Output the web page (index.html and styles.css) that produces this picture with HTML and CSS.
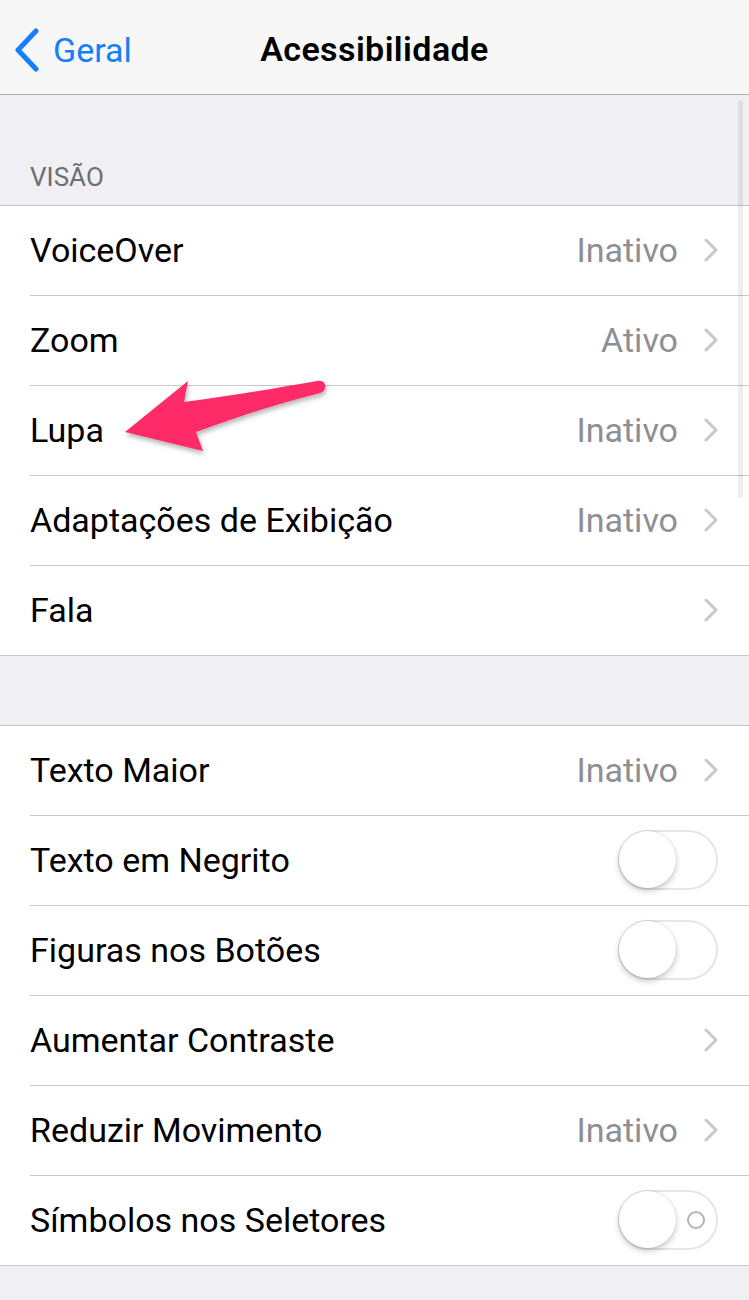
FILE: index.html
```html
<!DOCTYPE html>
<html lang="pt-BR">
<head>
  <meta charset="UTF-8">
  <title>Acessibilidade</title>
  <link rel="stylesheet" href="styles.css">
</head>
<body>
  <div class="screen">
    <!-- Barra de navegação -->
    <header class="navbar">
      <a class="back" href="#">
        <svg class="back-icon" width="28" height="44" viewBox="0 0 28 44">
          <path d="M23 3 L5 22 L23 41" fill="none" stroke="#157efb" stroke-width="5" stroke-linecap="round" stroke-linejoin="round"/>
        </svg>
        <span>Geral</span>
      </a>
      <h1 class="title">Acessibilidade</h1>
    </header>

    <div class="section-header">VISÃO</div>
    <ul class="group">
      <li class="row"><div class="row-inner"><span class="label">VoiceOver</span><span class="value">Inativo</span><i class="chevron"></i></div></li>
      <li class="row"><div class="row-inner"><span class="label">Zoom</span><span class="value">Ativo</span><i class="chevron"></i></div></li>
      <li class="row"><div class="row-inner"><span class="label">Lupa</span><span class="value">Inativo</span><i class="chevron"></i></div></li>
      <li class="row"><div class="row-inner"><span class="label">Adaptações de Exibição</span><span class="value">Inativo</span><i class="chevron"></i></div></li>
      <li class="row"><div class="row-inner"><span class="label">Fala</span><span class="value"></span><i class="chevron"></i></div></li>
    </ul>

    <div class="spacer"></div>
    <ul class="group">
      <li class="row"><div class="row-inner"><span class="label">Texto Maior</span><span class="value">Inativo</span><i class="chevron"></i></div></li>
      <li class="row"><div class="row-inner"><span class="label">Texto em Negrito</span><span class="switch"><span class="knob"></span></span></div></li>
      <li class="row"><div class="row-inner"><span class="label">Figuras nos Botões</span><span class="switch"><span class="knob"></span></span></div></li>
      <li class="row"><div class="row-inner"><span class="label">Aumentar Contraste</span><span class="value"></span><i class="chevron"></i></div></li>
      <li class="row"><div class="row-inner"><span class="label">Reduzir Movimento</span><span class="value">Inativo</span><i class="chevron"></i></div></li>
      <li class="row"><div class="row-inner"><span class="label">Símbolos nos Seletores</span><span class="switch"><span class="knob"></span><span class="off-mark"></span></span></div></li>
    </ul>

    <!-- barra de rolagem -->
    <div class="scrollbar"></div>

    <!-- seta de destaque -->
    <svg class="callout" width="749" height="1300" viewBox="0 0 749 1300">
      <defs>
        <filter id="sombra" x="-20%" y="-20%" width="140%" height="160%">
          <feDropShadow dx="1" dy="3" stdDeviation="2.5" flood-color="#000" flood-opacity="0.3"/>
        </filter>
      </defs>
      <path d="M125 432 L188 381 L184 402 C230 396 278 388 317 381 C327 379 328 391 320 393 C280 403 240 416 196 432 L203 451 Z" fill="#ff2a68" filter="url(#sombra)"/>
    </svg>
  </div>
</body>
</html>
```

FILE: styles.css
```css
body {
  margin: 0;
  background-color: #efeff4;
  font-family: Roboto, "Liberation Sans", sans-serif;
}
.screen {
  position: relative;
  width: 749px;
  min-height: 1300px;
  background-color: #efeff4;
}
.navbar {
  height: 94px;
  border-bottom: 1px solid #b2b2b2;
  background-color: #f7f7f8;
  display: flex;
  align-items: center;
  justify-content: center;
  position: relative;
}
.back {
  position: absolute;
  left: 13px;
  top: 28px;
  display: flex;
  align-items: center;
  gap: 12px;
  color: #157efb;
  text-decoration: none;
  font-size: 34px;
}
.title {
  margin: 3px 0 0;
  font-size: 34px;
  font-weight: 600;
  color: #000;
  letter-spacing: 0.4px;
}
.section-header {
  height: 110px;
  box-sizing: border-box;
  padding: 0 30px 15px;
  display: flex;
  align-items: flex-end;
  font-size: 26px;
  line-height: 26px;
  color: #6d6d72;
}
.spacer {
  height: 69px;
}
.group {
  list-style: none;
  margin: 0;
  padding: 0;
  background-color: #fff;
  border-top: 1px solid #c8c7cc;
  border-bottom: 1px solid #c8c7cc;
}
.row {
  height: 90px;
  padding-left: 30px;
  box-sizing: border-box;
}
.row:last-child {
  height: 89px;
}
.row-inner {
  height: 100%;
  box-sizing: border-box;
  display: flex;
  align-items: center;
  padding-right: 31px;
  padding-bottom: 2px;
  border-bottom: 1px solid #c8c7cc;
}
.row:last-child .row-inner {
  border-bottom: none;
}
.label {
  flex: 1;
  font-size: 34px;
  color: #000;
}
.value {
  font-size: 34px;
  color: #8e8e93;
  margin-right: 26px;
}
.chevron {
  width: 14px;
  height: 24px;
  background: no-repeat center / 14px 24px url("data:image/svg+xml;utf8,<svg xmlns='http://www.w3.org/2000/svg' width='14' height='24' viewBox='0 0 14 24'><path d='M2 2 L12 12 L2 22' fill='none' stroke='%23c7c7cc' stroke-width='3' stroke-linecap='round' stroke-linejoin='round'/></svg>");
}
.switch {
  width: 100px;
  height: 60px;
  box-sizing: border-box;
  border: 2px solid #e5e5ea;
  border-radius: 30px;
  background-color: #fff;
  display: flex;
  align-items: center;
}
.knob {
  width: 57px;
  height: 57px;
  margin-left: -1px;
  border-radius: 50%;
  background-color: #fff;
  box-shadow: 0 3px 6px rgba(0, 0, 0, 0.22), 0 0 0 1px rgba(0, 0, 0, 0.06);
}
.off-mark {
  width: 18px;
  height: 18px;
  box-sizing: border-box;
  border: 2px solid #b3b3b3;
  border-radius: 50%;
  margin-left: auto;
  margin-right: 11px;
}
.scrollbar {
  position: absolute;
  left: 738px;
  top: 100px;
  width: 5px;
  height: 398px;
  border-radius: 3px;
  background-color: rgba(0, 0, 0, 0.07);
}
.callout {
  position: absolute;
  left: 0;
  top: 0;
  pointer-events: none;
}
```
